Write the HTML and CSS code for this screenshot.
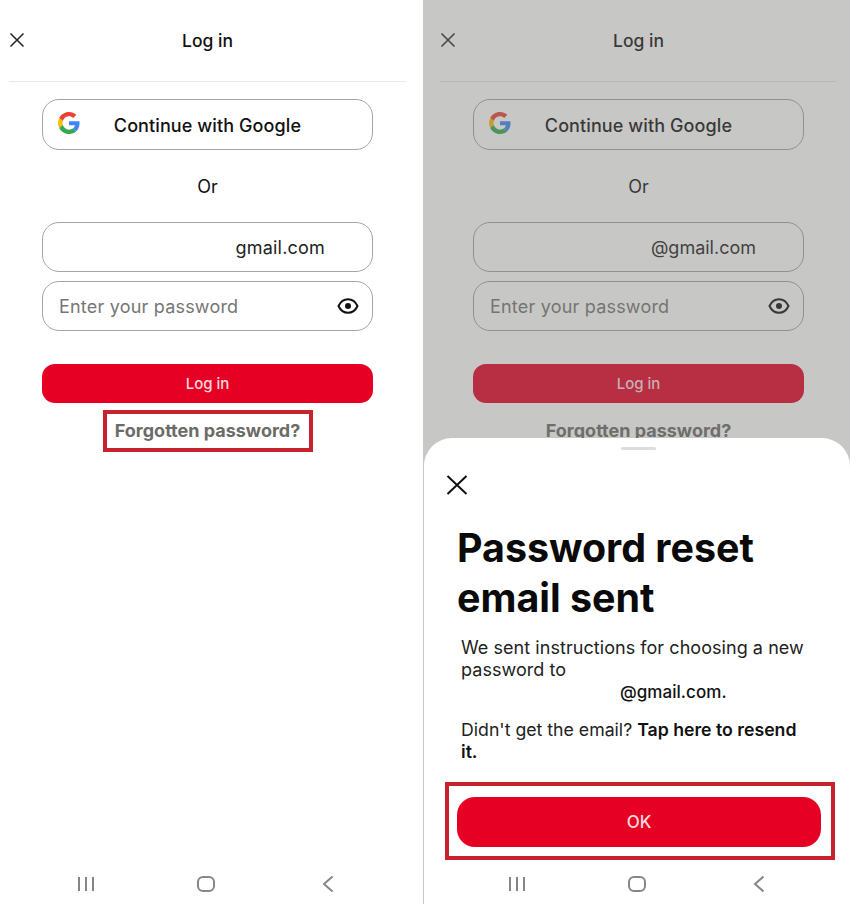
FILE: index.html
```html
<!DOCTYPE html>
<html lang="en">
<head>
    <meta charset="UTF-8">
    <meta name="viewport" content="width=device-width, initial-scale=1.0">
    <title>Log in</title>
    <link rel="stylesheet" href="styles.css">
</head>
<body>
    <div class="screens">
        <!-- Login form -->
        <div class="screen">
            <header class="top-bar">
                <svg class="close-icon" width="16" height="16" viewBox="0 0 16 16"><path d="M1.500 1.500l13 13M14.500 1.500l-13 13"/></svg>
                <h1>Log in</h1>
            </header>
            <div class="login-body">
                <button class="google-btn">
                    <svg class="google-icon" width="22" height="22" viewBox="0 0 48 48">
                        <path fill="#EA4335" d="M24 9.500c3.500 0 6.700 1.200 9.200 3.600l6.900-6.900C35.900 2.400 30.500 0 24 0 14.600 0 6.500 5.400 2.600 13.200l8 6.200C12.400 13.700 17.700 9.500 24 9.500z"/>
                        <path fill="#4285F4" d="M47 24.500c0-1.600-.1-3.100-.4-4.500H24v9h13c-.6 3-2.300 5.500-4.800 7.200l7.700 6C44.400 37.600 47 31.600 47 24.500z"/>
                        <path fill="#FBBC05" d="M10.600 28.600c-.5-1.400-.8-3-.8-4.600s.3-3.200.8-4.600l-8-6.200C.9 16.500 0 20.100 0 24s.9 7.500 2.600 10.800l8-6.200z"/>
                        <path fill="#34A853" d="M24 48c6.500 0 11.900-2.100 15.900-5.800l-7.700-6c-2.200 1.500-4.900 2.300-8.200 2.300-6.300 0-11.600-4.200-13.400-9.900l-8 6.200C6.500 42.600 14.600 48 24 48z"/>
                    </svg>
                    Continue with Google
                </button>
                <div class="or-label">Or</div>
                <div class="field field-email">gmail.com</div>
                <div class="field field-password">
                    <span>Enter your password</span>
                    <svg class="eye-icon" width="22" height="16" viewBox="0 0 22 16"><path d="M1.500 8C3.500 3.700 7 1.200 11 1.200S18.500 3.700 20.500 8C18.500 12.300 15 14.800 11 14.800S3.500 12.300 1.500 8z"/><circle cx="11" cy="8" r="3"/></svg>
                </div>
                <button class="primary-btn login-btn">Log in</button>
                <a class="forgot-link marked">Forgotten password?</a>
            </div>
            <nav class="nav-bar">
                <svg width="18" height="16" viewBox="0 0 18 16"><path d="M2 1v14M9 1v14M16 1v14"/></svg>
                <svg width="18" height="16" viewBox="0 0 18 16"><rect x="1" y="1" width="16" height="14" rx="5"/></svg>
                <svg width="12" height="18" viewBox="0 0 12 18"><path d="M10.500 1.500L2 9l8.500 7.500"/></svg>
            </nav>
        </div>

        <!-- Same form behind the reset sheet -->
        <div class="screen screen-dimmed">
            <header class="top-bar">
                <svg class="close-icon" width="16" height="16" viewBox="0 0 16 16"><path d="M1.500 1.500l13 13M14.500 1.500l-13 13"/></svg>
                <h1>Log in</h1>
            </header>
            <div class="login-body">
                <button class="google-btn">
                    <svg class="google-icon" width="22" height="22" viewBox="0 0 48 48">
                        <path fill="#EA4335" d="M24 9.500c3.500 0 6.700 1.200 9.200 3.600l6.900-6.900C35.900 2.400 30.500 0 24 0 14.600 0 6.500 5.400 2.600 13.200l8 6.200C12.400 13.700 17.700 9.500 24 9.500z"/>
                        <path fill="#4285F4" d="M47 24.500c0-1.600-.1-3.100-.4-4.500H24v9h13c-.6 3-2.300 5.500-4.800 7.200l7.700 6C44.400 37.600 47 31.600 47 24.500z"/>
                        <path fill="#FBBC05" d="M10.600 28.600c-.5-1.400-.8-3-.8-4.600s.3-3.200.8-4.600l-8-6.200C.9 16.500 0 20.100 0 24s.9 7.500 2.600 10.800l8-6.200z"/>
                        <path fill="#34A853" d="M24 48c6.500 0 11.900-2.100 15.900-5.800l-7.700-6c-2.200 1.500-4.900 2.300-8.200 2.300-6.300 0-11.600-4.200-13.400-9.900l-8 6.200C6.500 42.600 14.600 48 24 48z"/>
                    </svg>
                    Continue with Google
                </button>
                <div class="or-label">Or</div>
                <div class="field field-email">@gmail.com</div>
                <div class="field field-password">
                    <span>Enter your password</span>
                    <svg class="eye-icon" width="22" height="16" viewBox="0 0 22 16"><path d="M1.500 8C3.500 3.700 7 1.200 11 1.200S18.500 3.700 20.500 8C18.500 12.300 15 14.800 11 14.800S3.500 12.300 1.500 8z"/><circle cx="11" cy="8" r="3"/></svg>
                </div>
                <button class="primary-btn login-btn">Log in</button>
                <a class="forgot-link">Forgotten password?</a>
            </div>
            <div class="scrim"></div>
            <section class="sheet">
                <div class="sheet-handle"></div>
                <svg class="sheet-close" width="22" height="20" viewBox="0 0 22 20"><path d="M1.500 1l19 18M20.500 1l-19 18"/></svg>
                <h2>Password reset email sent</h2>
                <p class="sheet-text">We sent instructions for choosing a new password to <span class="sheet-email">@gmail.com.</span></p>
                <p class="sheet-text sheet-resend">Didn't get the email? <b>Tap here to resend</b> <b>it.</b></p>
                <div class="ok-mark">
                    <button class="primary-btn ok-btn">OK</button>
                </div>
                <nav class="nav-bar">
                    <svg width="18" height="16" viewBox="0 0 18 16"><path d="M2 1v14M9 1v14M16 1v14"/></svg>
                    <svg width="18" height="16" viewBox="0 0 18 16"><rect x="1" y="1" width="16" height="14" rx="5"/></svg>
                    <svg width="12" height="18" viewBox="0 0 12 18"><path d="M10.500 1.500L2 9l8.500 7.500"/></svg>
                </nav>
            </section>
        </div>
    </div>
</body>
</html>
```

FILE: styles.css
```css
* {
    box-sizing: border-box;
}
body {
    margin: 0;
    font-family: Inter, "Liberation Sans", sans-serif;
    color: #111;
    background-color: #fff;
}
.screens {
    display: flex;
    width: 850px;
    height: 904px;
    overflow: hidden;
}
.screen {
    position: relative;
    display: flex;
    flex-direction: column;
    width: 423px;
    height: 904px;
    padding-left: 9px;
    background-color: #fff;
}
.screen-dimmed {
    width: 427px;
    padding-left: 17px;
}
.top-bar {
    display: flex;
    align-items: center;
    justify-content: center;
    position: relative;
    flex: none;
    width: 397px;
    height: 82px;
    border-bottom: 1px solid #e8e8e8;
}
.top-bar h1 {
    margin: 0;
    font-size: 17.5px;
    font-weight: 500;
}
.close-icon {
    position: absolute;
    left: 0;
    top: 32px;
    fill: none;
    stroke: #222;
    stroke-width: 1.5;
}
.login-body {
    display: flex;
    flex-direction: column;
    align-items: center;
    width: 331px;
    margin: 17px 0 0 33px;
}
.google-btn {
    position: relative;
    width: 331px;
    height: 51px;
    padding: 2px 0 0;
    border: 1.5px solid #a5a5a5;
    border-radius: 17px;
    background: none;
    font-family: inherit;
    font-size: 18px;
    font-weight: 500;
    letter-spacing: 0.1px;
    color: #111;
}
.google-icon {
    position: absolute;
    left: 15px;
    top: 12px;
}
.or-label {
    height: 72px;
    line-height: 74px;
    font-size: 18px;
}
.field {
    display: flex;
    align-items: center;
    width: 331px;
    height: 50px;
    margin-bottom: 9px;
    border: 1.5px solid #a5a5a5;
    border-radius: 17px;
    font-size: 18px;
    letter-spacing: 0.2px;
}
.field-email {
    justify-content: flex-end;
    padding-right: 47px;
    color: #222;
}
.screen-dimmed .field-email {
    letter-spacing: 0;
}
.field-password {
    justify-content: space-between;
    padding: 0 13px 0 16px;
    color: #767676;
}
.eye-icon {
    fill: none;
    stroke: #111;
    stroke-width: 2;
}
.eye-icon circle {
    fill: #111;
    stroke: none;
}
.primary-btn {
    border: none;
    background-color: #e60023;
    color: #fff;
    font-family: inherit;
    font-size: 15px;
    font-weight: 500;
}
.login-btn {
    width: 331px;
    height: 39px;
    margin-top: 24px;
    border-radius: 13px;
    color: #fbd9de;
}
.forgot-link {
    display: flex;
    align-items: center;
    justify-content: center;
    width: 210px;
    height: 42px;
    margin-top: 7px;
    padding-bottom: 2px;
    border: 4px solid transparent;
    color: #6b6b68;
    font-size: 18px;
    font-weight: 700;
    white-space: nowrap;
}
.marked {
    border-color: #c8222e;
}
.nav-bar {
    display: flex;
    align-items: center;
    flex: none;
    gap: 102px;
    width: 260px;
    height: 40px;
    margin: auto 0 0 68px;
}
.nav-bar svg {
    fill: none;
    stroke: #868686;
    stroke-width: 2;
}
.nav-bar svg:last-child {
    margin-left: 5px;
}
.scrim {
    position: absolute;
    inset: 0;
    background-color: rgba(115, 115, 112, 0.4);
}
.sheet {
    position: absolute;
    left: 1px;
    right: 0;
    top: 438px;
    bottom: 0;
    display: flex;
    flex-direction: column;
    padding-left: 33px;
    background-color: #fff;
    border-radius: 28px 28px 0 0;
}
.sheet .nav-bar {
    margin-left: 51px;
}
.sheet-handle {
    position: absolute;
    left: 197px;
    top: 9px;
    width: 35px;
    height: 3px;
    border-radius: 2px;
    background-color: #ddd;
}
.sheet-close {
    flex: none;
    margin: 37px 0 0 -11px;
    fill: none;
    stroke: #111;
    stroke-width: 2;
}
.sheet h2 {
    width: 320px;
    margin: 28px 0 14px;
    font-size: 39.4px;
    line-height: 50px;
    font-weight: 700;
    color: #0a0a0a;
}
.sheet-text {
    width: 350px;
    margin: 0 0 16px 4px;
    font-size: 18px;
    line-height: 22px;
    letter-spacing: 0.05px;
    color: #222;
}
.sheet-resend {
    font-size: 17.7px;
    letter-spacing: 0;
}
.sheet-text b {
    font-weight: 600;
    color: #111;
}
.sheet-email {
    display: block;
    padding-left: 159px;
    font-size: 17px;
    font-weight: 500;
    color: #111;
}
.ok-mark {
    display: flex;
    align-items: center;
    justify-content: center;
    flex: none;
    width: 390px;
    height: 78px;
    margin: 3px 0 0 -12px;
    padding: 2px 2px 0 0;
    border: 4px solid #c8222e;
}
.ok-btn {
    width: 364px;
    height: 50px;
    border-radius: 18px;
    font-size: 17px;
    color: #fbd9de;
}
```
